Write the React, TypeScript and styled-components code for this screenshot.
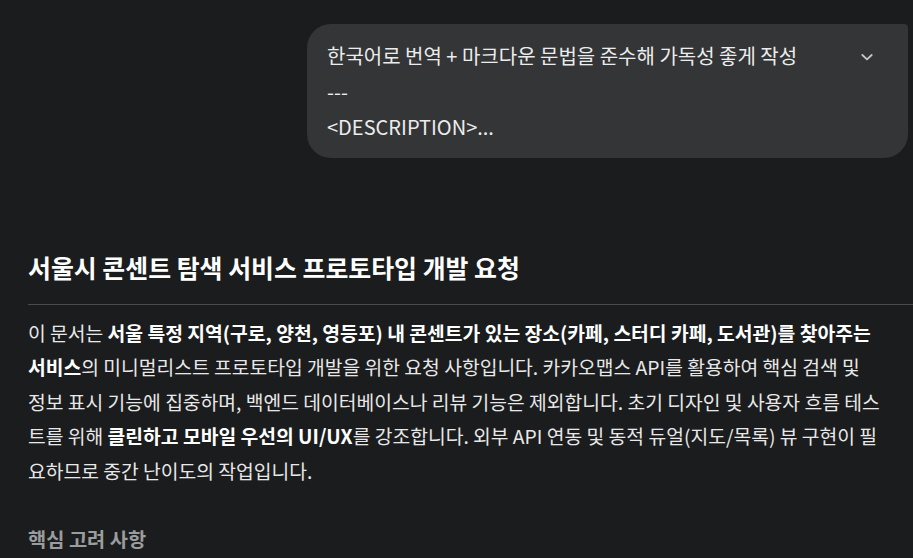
import React from 'react';
import styled, {createGlobalStyle} from 'styled-components';

const GlobalStyle = createGlobalStyle`
  html, body {
    margin: 0;
    padding: 0;
    background: #1b1c1d;
    overflow: hidden;
  }
  body {
    font-family: "Noto Sans CJK KR", "Noto Sans", sans-serif;
    color: #e3e3e3;
  }
`

const ChevronIcon = () => (
    <svg width="16" height="16" viewBox="0 0 24 24" fill="none" stroke="#c4c7c5" strokeWidth="2.8"
         strokeLinecap="round" strokeLinejoin="round">
        <polyline points="5 9 12 15.5 19 9"/>
    </svg>
)

const App = () => {
    return (
        <Page>
            <GlobalStyle/>
            <QueryRow>
                <QueryBubble>
                    <QueryText>
                        <QueryLine>한국어로 번역 + 마크다운 문법을 준수해 가독성 좋게 작성</QueryLine>
                        <QueryLine>---</QueryLine>
                        <QueryLine>&lt;DESCRIPTION&gt;...</QueryLine>
                    </QueryText>
                    <ExpandButton>
                        <ChevronIcon/>
                    </ExpandButton>
                </QueryBubble>
            </QueryRow>
            <Answer>
                <Title>서울시 콘센트 탐색 서비스 프로토타입 개발 요청</Title>
                <Divider/>
                <Paragraph>
                    이 문서는 <b>서울 특정 지역(구로, 양천, 영등포) 내 콘센트가 있는 장소(카페, 스터디 카페, 도서관)를 찾아주는</b><br/>
                    <b>서비스</b>의 미니멀리스트 프로토타입 개발을 위한 요청 사항입니다. 카카오맵스 API를 활용하여 핵심 검색 및<br/>
                    정보 표시 기능에 집중하며, 백엔드 데이터베이스나 리뷰 기능은 제외합니다. 초기 디자인 및 사용자 흐름 테스<br/>
                    트를 위해 <b>클린하고 모바일 우선의 UI/UX</b>를 강조합니다. 외부 API 연동 및 동적 듀얼(지도/목록) 뷰 구현이 필<br/>
                    요하므로 중간 난이도의 작업입니다.
                </Paragraph>
                <SubTitle>핵심 고려 사항</SubTitle>
            </Answer>
        </Page>
    );
};

const Page = styled.div`
  width: 913px;
  height: 558px;
  overflow: hidden;
  display: flex;
  flex-direction: column;
`
const QueryRow = styled.div`
  display: flex;
  justify-content: flex-end;
  padding: 24px 5px 0 0;
`
const QueryBubble = styled.div`
  width: 601px;
  box-sizing: border-box;
  background: #333537;
  border-radius: 24px 4px 24px 24px;
  padding: 14px 33px 13px 20px;
  display: flex;
  align-items: flex-start;
`
const QueryText = styled.div`
  flex: 1;
`
const QueryLine = styled.div`
  font-size: 20px;
  line-height: 35.5px;
  color: #ececec;
  white-space: nowrap;
`
const ExpandButton = styled.div`
  display: flex;
  align-items: center;
  justify-content: center;
  margin-top: 11px;
  cursor: pointer;
`
const Answer = styled.div`
  padding: 94px 0 0 28px;
`
const Title = styled.h1`
  margin: 0;
  font-size: 24.9px;
  font-weight: 700;
  line-height: 30px;
  color: #ffffff;
`
const Divider = styled.hr`
  margin: 22px 0 11px;
  border: none;
  border-top: 1px solid #4a4b4d;
`
const Paragraph = styled.p`
  margin: 0;
  font-size: 19.3px;
  line-height: 34.5px;
  color: #e8e8e8;
  white-space: nowrap;

  b {
    font-weight: 700;
    color: #ffffff;
  }
`
const SubTitle = styled.h2`
  margin: 36px 0 0;
  font-size: 19.8px;
  font-weight: 700;
  line-height: 30px;
  color: #9b9c9d;
`

export default App;
